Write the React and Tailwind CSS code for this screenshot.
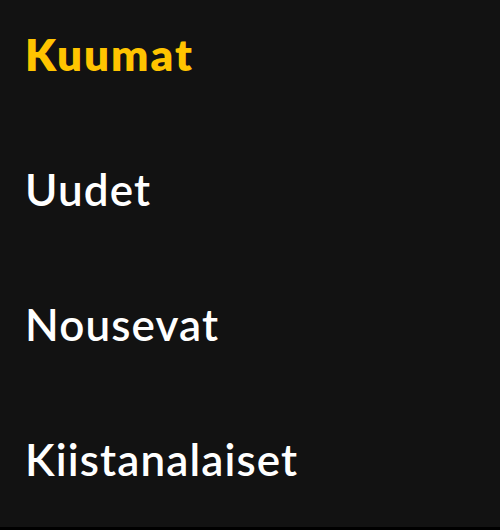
import React from 'react';

const sorts = [
  { label: 'Kuumat', active: true },
  { label: 'Uudet' },
  { label: 'Nousevat' },
  { label: 'Kiistanalaiset' },
];

export default function App() {
  return (
    <div className="h-[530px] w-[500px] bg-[#121212] border-b-[3px] border-black overflow-hidden" style={{ fontFamily: 'Lato, "Open Sans", sans-serif' }}>
      <ul className="flex flex-col gap-[91px] pt-[32px] px-[25px]">
        {sorts.map((s) => (
          <li
            key={s.label}
            className={`text-[44px] leading-none ${s.active ? 'text-[#ffc400] font-extrabold tracking-[2px]' : 'text-white font-semibold tracking-[1.1px]'}`}
          >
            {s.label}
          </li>
        ))}
      </ul>
    </div>
  );
}
